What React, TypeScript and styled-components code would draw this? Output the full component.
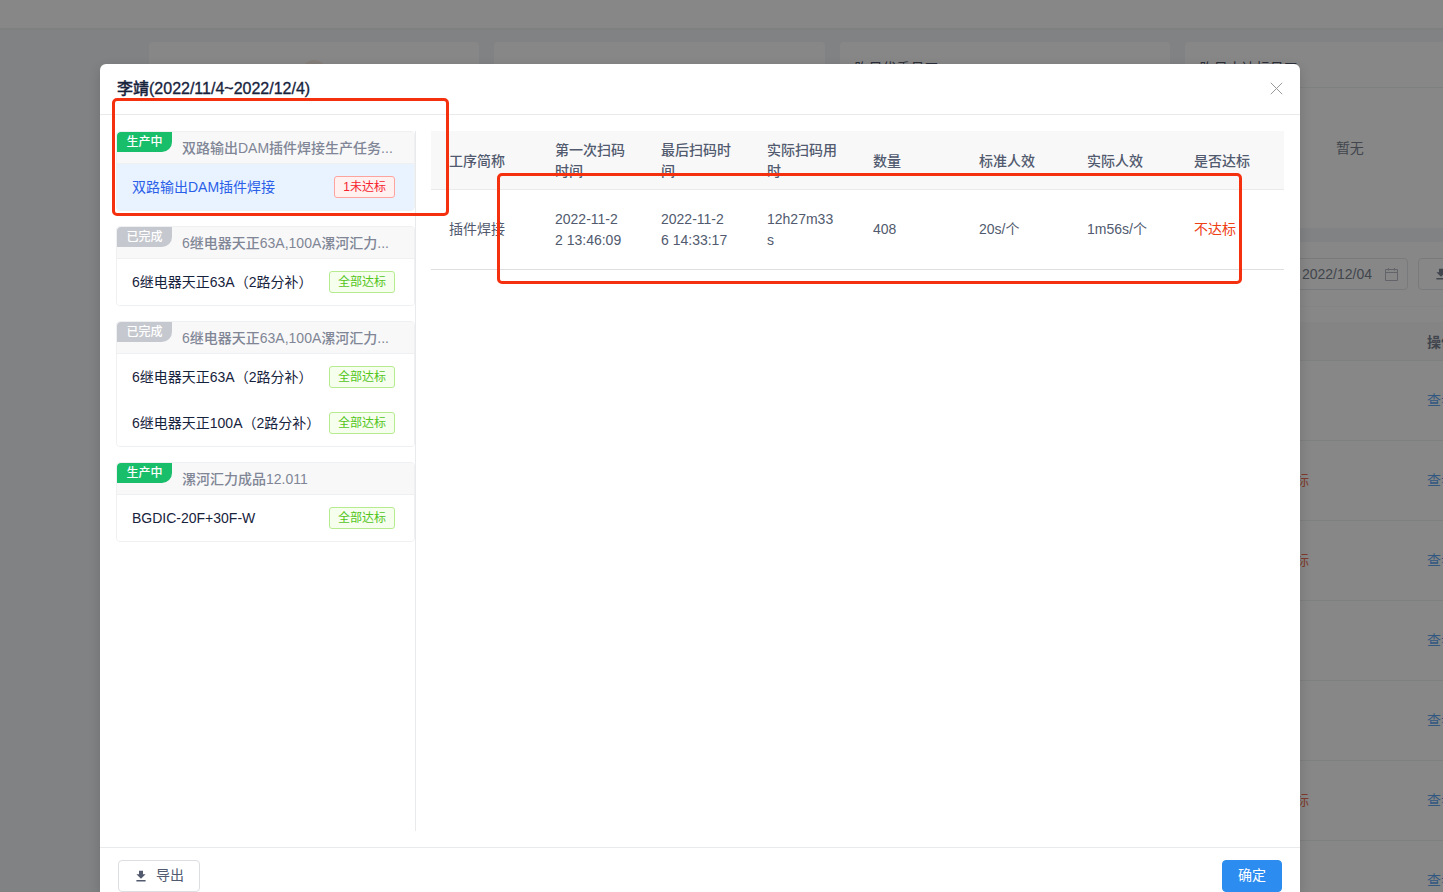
import React from "react";
import styled, { createGlobalStyle, css } from "styled-components";

const GlobalStyle = createGlobalStyle`
  *, *::before, *::after { box-sizing: border-box; }
  body {
    margin: 0;
    font-family: "Liberation Sans", "Noto Sans CJK SC", sans-serif;
    font-size: 14px;
    line-height: 21px;
    color: #515a6e;
  }
  button, input { font: inherit; color: inherit; }
  h1, h2, h3, p, ul { margin: 0; padding: 0; font-size: inherit; font-weight: inherit; list-style: none; }
`;

/* Page behind the dialog */

const Page = styled.div`
  position: relative;
  height: 100vh;
  overflow: hidden;
  background: #eff2f5;
`;

const TopBar = styled.header`
  height: 30px;
  background: #fff;
  border-bottom: 2px solid #e8eaec;
`;

const Main = styled.main`
  display: flex;
  flex-direction: column;
  gap: 14px;
  margin: 12px -72px 0 149px;
`;

const StatCards = styled.div`
  display: flex;
  gap: 15px;
`;

const StatCard = styled.section`
  flex: 1;
  height: 186px;
  background: #fff;
  border-radius: 4px;
`;

const StatTitle = styled.h3`
  height: 46px;
  padding: 16px 15px 0;
  border-bottom: 1px solid #e8eaec;
  color: #17233d;
`;

const StatEmpty = styled.p`
  display: flex;
  align-items: center;
  justify-content: center;
  height: 120px;
`;

const MedalWrap = styled.div`
  display: flex;
  justify-content: center;
  padding-top: 18px;
`;

const ListPanel = styled.section`
  padding: 16px 15px;
  background: #fff;
  border-radius: 4px;
`;

const Toolbar = styled.div`
  display: flex;
  justify-content: flex-end;
  gap: 10px;
  padding-bottom: 16px;
  margin-bottom: 15px;
  border-bottom: 1px solid #f8f8f9;
`;

const DateField = styled.label`
  display: flex;
  align-items: center;
  gap: 13px;
  width: 220px;
  height: 32px;
  padding: 0 9px;
  border: 1px solid #dcdee2;
  border-radius: 4px;
`;

const DateInput = styled.input`
  flex: 1;
  min-width: 0;
  padding: 0;
  border: 0;
  outline: 0;
  background: none;
  text-align: right;
`;

const BackTable = styled.table`
  width: 100%;
  table-layout: fixed;
  border-collapse: separate;
  border-spacing: 0;
  text-align: left;

  th, td { padding: 0 18px; border-bottom: 1px solid #e8eaec; white-space: nowrap; }
  th { height: 39px; padding-top: 2px; background: #f8f8f9; }
  td { height: 80px; }
`;

const StatusCol = styled.col`
  width: 160px;
`;

const ActionCol = styled.col`
  width: 91px;
`;

const Link = styled.a`
  color: #2d8cf0;
  text-decoration: none;
`;

const Failed = styled.span`
  color: #ed4014;
`;

/* Dialog */

const Mask = styled.div`
  position: absolute;
  inset: 0;
  display: flex;
  padding: 64px 143px 0 100px;
  background: rgba(55, 55, 55, 0.6);
`;

const Dialog = styled.div`
  position: relative;
  display: flex;
  flex: 1;
  flex-direction: column;
  min-width: 0;
  background: #fff;
  border-radius: 6px 6px 0 0;
  box-shadow: 0 4px 12px rgba(0, 0, 0, 0.15);
`;

const DialogHeader = styled.header`
  display: flex;
  align-items: center;
  justify-content: space-between;
  height: 51px;
  padding: 0 17px 2px;
  border-bottom: 1px solid #e8eaec;
`;

const DialogTitle = styled.h2`
  font-size: 16px;
  font-weight: 500;
  color: #17233d;
  -webkit-text-stroke: thin;
`;

const CloseButton = styled.button`
  display: flex;
  padding: 0;
  border: 0;
  background: none;
`;

const DialogBody = styled.div`
  display: flex;
  flex: 1;
  gap: 15px;
  padding: 16px 16px 16px 16px;
`;

const DialogFooter = styled.footer`
  display: flex;
  justify-content: space-between;
  padding: 12px 18px 0;
  border-top: 1px solid #e8eaec;
`;

const Button = styled.button<{ $primary?: boolean }>`
  display: inline-flex;
  flex-shrink: 0;
  align-items: center;
  justify-content: center;
  gap: 8px;
  height: 32px;
  padding: 0 15px 1px;
  border: 1px solid #dcdee2;
  border-radius: 4px;
  background: #fff;
  white-space: nowrap;
  ${(p) => p.$primary && css`
    border-color: #2d8cf0;
    background: #2d8cf0;
    color: #fff;
  `}
`;

const TaskList = styled.aside`
  display: flex;
  flex-direction: column;
  flex-shrink: 0;
  gap: 15px;
  width: 300px;
  border-right: 1px solid #e8eaec;
`;

const TaskCard = styled.section`
  border: 1px solid #eef0f2;
  border-radius: 4px;
  overflow: hidden;
`;

const TaskHeader = styled.header`
  display: flex;
  gap: 10px;
  height: 32px;
  background: #f8f8f9;
  border-bottom: 1px solid #eef0f2;
`;

const StateBadge = styled.span<{ $done?: boolean }>`
  flex-shrink: 0;
  width: 55px;
  height: 20px;
  border-radius: 4px 0 10px 0;
  background: ${(p) => (p.$done ? "#c5c8ce" : "#19be6b")};
  color: #fff;
  font-size: 12px;
  font-weight: 500;
  line-height: 21px;
  text-align: center;
`;

const TaskTitle = styled.h3`
  font-weight: 500;
  line-height: 32px;
  color: #808695;
  white-space: nowrap;
`;

const TaskItem = styled.li<{ $active?: boolean }>`
  display: flex;
  align-items: center;
  justify-content: space-between;
  height: 46px;
  padding: 0 19px 0 15px;
  background: ${(p) => (p.$active ? "#e8f3ff" : "#fff")};
  color: ${(p) => (p.$active ? "#2b5fe8" : "#17233d")};
  white-space: nowrap;
`;

const Tag = styled.span<{ $fail?: boolean }>`
  height: 22px;
  padding: 0 8px;
  border: 1px solid ${(p) => (p.$fail ? "#ffa39e" : "#b7eb8f")};
  border-radius: 3px;
  background: ${(p) => (p.$fail ? "#fff1f0" : "#f6ffed")};
  color: ${(p) => (p.$fail ? "#f5222d" : "#52c41a")};
  font-size: 12px;
  line-height: 20px;
`;

const TableArea = styled.div`
  flex: 1;
  min-width: 0;
`;

const DetailTable = styled.table`
  width: 100%;
  table-layout: fixed;
  border-collapse: separate;
  border-spacing: 0;
  text-align: left;
  word-break: break-all;

  th, td { padding: 0 18px; }
  th {
    height: 59px;
    padding-top: 2px;
    background: #f8f8f9;
    border-bottom: 1px solid #e8eaec;
    font-weight: 500;
  }
  td { height: 80px; border-bottom: 1px solid #dcdee2; }
`;

const DetailCol = styled.col<{ $width?: number }>`
  width: ${(p) => (p.$width ? `${p.$width}px` : "auto")};
`;

const Highlight = styled.div<{ $box: [number, number, number, number] }>`
  position: absolute;
  left: ${(p) => p.$box[0]}px;
  top: ${(p) => p.$box[1]}px;
  width: ${(p) => p.$box[2]}px;
  height: ${(p) => p.$box[3]}px;
  border: 3px solid #f5300f;
  border-radius: 5px;
  pointer-events: none;
`;

const DownloadIcon = () => (
  <svg width="14" height="14" viewBox="0 0 14 14" fill="currentColor" aria-hidden="true">
    <path d="M5 1.8h4v3.4h2.6L7 9.8 2.4 5.2H5zM2.4 11h9.2v1.5H2.4z" />
  </svg>
);

const CalendarIcon = () => (
  <svg width="13" height="13" viewBox="0 0 13 13" fill="none" stroke="#a3a8b3" aria-hidden="true">
    <path d="M.5 1.5h12v11H.5zM.5 4.5h12M3.5 0v2.5M9.5 0v2.5" />
  </svg>
);

const CloseIcon = () => (
  <svg width="13" height="13" viewBox="0 0 13 13" stroke="#999" fill="none" aria-hidden="true">
    <path d="M.8.8l11.4 11.4M12.2.8L.8 12.2" />
  </svg>
);

const MedalIcon = () => (
  <svg width="26" height="26" viewBox="0 0 26 26" aria-hidden="true">
    <circle cx="13" cy="13" r="13" fill="#fbe9de" />
  </svg>
);

type Task = {
  done?: boolean;
  title: string;
  items: { name: string; tag: string; fail?: boolean; active?: boolean }[];
};

const tasks: Task[] = [
  {
    title: "双路输出DAM插件焊接生产任务...",
    items: [{ name: "双路输出DAM插件焊接", tag: "1未达标", fail: true, active: true }],
  },
  {
    done: true,
    title: "6继电器天正63A,100A漯河汇力...",
    items: [{ name: "6继电器天正63A（2路分补）", tag: "全部达标" }],
  },
  {
    done: true,
    title: "6继电器天正63A,100A漯河汇力...",
    items: [
      { name: "6继电器天正63A（2路分补）", tag: "全部达标" },
      { name: "6继电器天正100A（2路分补）", tag: "全部达标" },
    ],
  },
  {
    title: "漯河汇力成品12.011",
    items: [{ name: "BGDIC-20F+30F-W", tag: "全部达标" }],
  },
];

const columns: { label: string; width?: number }[] = [
  { label: "工序简称", width: 106 },
  { label: "第一次扫码时间", width: 106 },
  { label: "最后扫码时间", width: 106 },
  { label: "实际扫码用时", width: 106 },
  { label: "数量", width: 106 },
  { label: "标准人效", width: 108 },
  { label: "实际人效", width: 107 },
  { label: "是否达标" },
];
const record = ["插件焊接", "2022-11-22 13:46:09", "2022-11-26 14:33:17", "12h27m33s", "408", "20s/个", "1m56s/个"];
const listRows = [false, true, true, false, false, true, false];

export default function App() {
  return (
    <>
      <GlobalStyle />
      <Page>
        <TopBar />
        <Main>
          <StatCards>
            <StatCard>
              <MedalWrap><MedalIcon /></MedalWrap>
            </StatCard>
            <StatCard />
            <StatCard>
              <StatTitle>昨日优秀员工</StatTitle>
            </StatCard>
            <StatCard>
              <StatTitle>昨日未达标员工</StatTitle>
              <StatEmpty>暂无</StatEmpty>
            </StatCard>
          </StatCards>
          <ListPanel>
            <Toolbar>
              <DateField>
                <DateInput aria-label="日期" defaultValue="2022/12/04" />
                <CalendarIcon />
              </DateField>
              <Button type="button"><DownloadIcon />导出</Button>
            </Toolbar>
            <BackTable>
              <colgroup>
                <col />
                <StatusCol />
                <ActionCol />
              </colgroup>
              <thead>
                <tr><th /><th /><th>操作</th></tr>
              </thead>
              <tbody>
                {listRows.map((failed, i) => (
                  <tr key={i}>
                    <td />
                    <td>{failed && <Failed>不达标</Failed>}</td>
                    <td><Link href="#">查看</Link></td>
                  </tr>
                ))}
              </tbody>
            </BackTable>
          </ListPanel>
        </Main>

        <Mask>
          <Dialog role="dialog" aria-labelledby="dialog-title">
            <DialogHeader>
              <DialogTitle id="dialog-title">李靖(2022/11/4~2022/12/4)</DialogTitle>
              <CloseButton type="button" aria-label="关闭"><CloseIcon /></CloseButton>
            </DialogHeader>
            <DialogBody>
              <TaskList>
                {tasks.map((task, i) => (
                  <TaskCard key={i}>
                    <TaskHeader>
                      <StateBadge $done={task.done}>{task.done ? "已完成" : "生产中"}</StateBadge>
                      <TaskTitle>{task.title}</TaskTitle>
                    </TaskHeader>
                    <ul>
                      {task.items.map((item) => (
                        <TaskItem key={item.name} $active={item.active}>
                          {item.name}
                          <Tag $fail={item.fail}>{item.tag}</Tag>
                        </TaskItem>
                      ))}
                    </ul>
                  </TaskCard>
                ))}
              </TaskList>
              <TableArea>
                <DetailTable>
                  <colgroup>
                    {columns.map((c) => <DetailCol key={c.label} $width={c.width} />)}
                  </colgroup>
                  <thead>
                    <tr>{columns.map((c) => <th key={c.label} scope="col">{c.label}</th>)}</tr>
                  </thead>
                  <tbody>
                    <tr>
                      {record.map((v) => <td key={v}>{v}</td>)}
                      <td><Failed>不达标</Failed></td>
                    </tr>
                  </tbody>
                </DetailTable>
              </TableArea>
            </DialogBody>
            <DialogFooter>
              <Button type="button"><DownloadIcon />导出</Button>
              <Button type="button" $primary>确定</Button>
            </DialogFooter>
            <Highlight $box={[12, 34, 337, 118]} />
            <Highlight $box={[397, 109, 745, 111]} />
          </Dialog>
        </Mask>
      </Page>
    </>
  );
}
